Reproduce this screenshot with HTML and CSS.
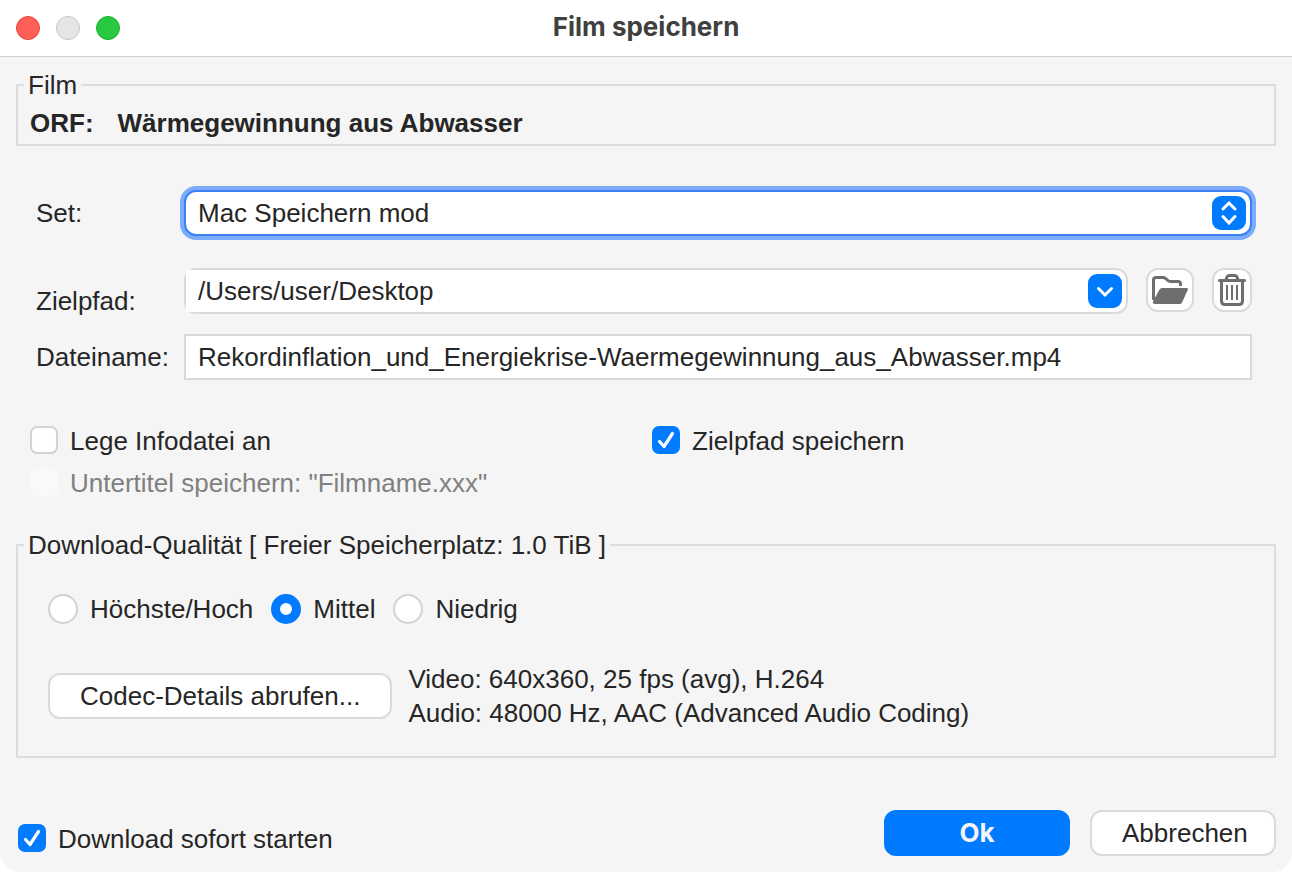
FILE: index.html
```html
<!DOCTYPE html>
<html lang="de">
<head>
  <meta charset="UTF-8">
  <meta name="viewport" content="width=device-width, initial-scale=1.0">
  <title>Film speichern</title>
  <link rel="stylesheet" href="styles.css">
</head>
<body>
  <div class="window">
    <header class="titlebar">
      <div class="lights">
        <span class="light close"></span>
        <span class="light minimize"></span>
        <span class="light zoom"></span>
      </div>
      <h1>Film speichern</h1>
    </header>

    <form class="content">
      <fieldset class="film">
        <legend>Film</legend>
        <p><span>ORF:</span><span>Wärmegewinnung aus Abwasser</span></p>
      </fieldset>

      <div class="fields">
        <label for="set">Set:</label>
        <div class="select-wrap">
          <select id="set">
            <option>Mac Speichern mod</option>
          </select>
          <svg class="arrows" viewBox="0 0 34 34" aria-hidden="true">
            <path d="M11 13 L17 7 L23 13 M11 20.5 L17 27 L23 20.5"/>
          </svg>
        </div>

        <label for="path" class="low">Zielpfad:</label>
        <div class="path-row">
          <div class="combo">
            <input type="text" id="path" value="/Users/user/Desktop">
            <button type="button" class="drop" aria-label="Pfade">
              <svg viewBox="0 0 34 34"><path d="M10.5 14.5 L17 21 L23.5 14.5"/></svg>
            </button>
          </div>
          <button type="button" class="icon-btn folder" aria-label="Ordner">
            <svg width="36" height="28" viewBox="0 0 36 28">
              <path d="M1.5 24 V4 Q1.5 1.5 4 1.5 H11 Q12.5 1.5 13.5 2.5 L16 4.5 Q17 5.5 18.5 5.5 H26 Q28.5 5.5 28.5 8 V10" fill="none" stroke="#6e6e6e" stroke-width="3"/>
              <path d="M10 12 H34.5 Q36.5 12 35.7 14 L30.5 25.5 Q29.5 28 28 28 H3 Q0 28 1 25.5 L7.5 13.5 Q8.5 12 10 12 Z" fill="#6e6e6e"/>
            </svg>
          </button>
          <button type="button" class="icon-btn trash" aria-label="Löschen">
            <svg width="28" height="32" viewBox="0 0 28 32" fill="none" stroke="#6e6e6e">
              <path d="M8 6 L9 3 Q9.5 1.5 11 1.5 H17 Q18.5 1.5 19 3 L20 6" stroke-width="3"/>
              <path d="M1.5 6.5 H26.5" stroke-width="3" stroke-linecap="round"/>
              <path d="M3.5 7 V27 Q3.5 30.5 7 30.5 H21 Q24.5 30.5 24.5 27 V7" stroke-width="3"/>
              <path d="M9 11 V26 M14 11 V26 M19 11 V26" stroke-width="2"/>
            </svg>
          </button>
        </div>

        <label for="name">Dateiname:</label>
        <input type="text" id="name" class="name" value="Rekordinflation_und_Energiekrise-Waermegewinnung_aus_Abwasser.mp4">
      </div>

      <div class="options">
        <label class="check"><input type="checkbox">Lege Infodatei an</label>
        <label class="check"><input type="checkbox" checked>Zielpfad speichern</label>
        <label class="check disabled"><input type="checkbox" disabled>Untertitel speichern: "Filmname.xxx"</label>
      </div>

      <fieldset class="quality">
        <legend>Download-Qualität [ Freier Speicherplatz: 1.0 TiB ]</legend>
        <div class="radios">
          <label class="check"><input type="radio" name="quality">Höchste/Hoch</label>
          <label class="check"><input type="radio" name="quality" checked>Mittel</label>
          <label class="check"><input type="radio" name="quality">Niedrig</label>
        </div>
        <div class="codec">
          <button type="button" class="btn">Codec-Details abrufen...</button>
          <p>Video: 640x360, 25 fps (avg), H.264<br>Audio: 48000 Hz, AAC (Advanced Audio Coding)</p>
        </div>
      </fieldset>

      <footer class="footer">
        <label class="check"><input type="checkbox" checked>Download sofort starten</label>
        <button type="submit" class="btn primary">Ok</button>
        <button type="button" class="btn">Abbrechen</button>
      </footer>
    </form>
  </div>
</body>
</html>
```
FILE: styles.css
```css
*,*::before,*::after{
  margin: 0;
  padding: 0;
  box-sizing: border-box;
}
body{
  background: #fff;
  color: #262626;
  font: 26px/30px "Liberation Sans", Arial, sans-serif;
}
input, select, button{
  font: inherit;
  color: inherit;
  outline: none;
}
.window{
  min-height: 100vh;
  background: #f5f5f5;
  border-radius: 0 0 20px 20px;
}

/* title bar */
.titlebar{
  display: grid;
  grid-template-columns: 1fr auto 1fr;
  align-items: center;
  height: 57px;
  padding: 0 16px;
  background: #fff;
  border-bottom: 1px solid #cfcfcf;
}
.titlebar h1{
  font: 700 26px/30px Inter, sans-serif;
  color: #404040;
  padding-bottom: 2px;
}
.lights{
  display: flex;
  gap: 16px;
}
.light{
  width: 24px;
  height: 24px;
  border-radius: 50%;
  border: 1px solid;
}
.close{
  background: #ff5f57;
  border-color: #e2463f;
}
.minimize{
  background: #e5e5e5;
  border-color: #c6c6c6;
}
.zoom{
  background: #28c840;
  border-color: #1fae30;
}

.content{
  padding: 13px 16px 16px;
}
fieldset{
  border: 2px solid #dcdcdc;
  min-width: 0;
}
legend{
  margin-left: 6px;
  padding: 0 4px;
}
.film p{
  display: flex;
  gap: 24px;
  padding: 8px 12px 6px;
  font-weight: 700;
}

/* form rows */
.fields{
  display: grid;
  grid-template-columns: 148px 1fr;
  align-items: center;
  padding: 44px 24px 0 20px;
}
.select-wrap{
  position: relative;
}
.select-wrap select{
  display: block;
  width: 100%;
  height: 46px;
  padding: 0 50px 0 12px;
  appearance: none;
  background: #fff;
  border: 2px solid #3b82f0;
  border-radius: 12px;
  box-shadow: 0 0 0 4px #7aacfb;
}
.arrows{
  position: absolute;
  top: 6px;
  right: 6px;
  width: 34px;
  height: 34px;
  border-radius: 9px;
  background: #007aff;
  pointer-events: none;
}
.arrows path, .drop path{
  fill: none;
  stroke: #fff;
  stroke-width: 3;
  stroke-linecap: round;
}
.low{
  align-self: end;
}
.path-row{
  display: flex;
  margin: 32px 0 20px;
}
.fields .low{
  margin-bottom: 18px;
}
.combo{
  flex: 1;
  display: flex;
  align-items: center;
  height: 46px;
  padding-right: 4px;
  background: #fff;
  border: 2px solid #dadada;
  border-radius: 12px;
}
.combo input{
  flex: 1;
  min-width: 0;
  height: 42px;
  padding-left: 12px;
  border: none;
  background: #fff;
}
.drop{
  width: 34px;
  height: 34px;
  border: none;
  border-radius: 9px;
  background: #007aff;
}
.drop svg{
  display: block;
}
.icon-btn{
  display: flex;
  align-items: center;
  justify-content: center;
  height: 44px;
  margin-left: 18px;
  background: #fff;
  border: 2px solid #dadada;
  border-radius: 12px;
}
.folder{
  width: 48px;
}
.trash{
  width: 40px;
}
.name{
  width: 100%;
  height: 46px;
  padding: 0 12px;
  background: #fff;
  border: 2px solid #dadada;
}

/* tick boxes and radios */
.options{
  display: grid;
  grid-template-columns: 1fr 1fr;
  gap: 12px 0;
  padding: 46px 2px 32px 14px;
}
.check{
  display: flex;
  gap: 12px;
}
.check input{
  flex: none;
  width: 28px;
  height: 28px;
  appearance: none;
  background: #fff;
  border: 2px solid #d2d2d2;
  border-radius: 7px;
}
.check input[type=checkbox]:checked{
  border: none;
  background: #007aff url("data:image/svg+xml,%3Csvg xmlns='http://www.w3.org/2000/svg' viewBox='0 0 28 28'%3E%3Cpath d='M7.5 15.500 L12 20.500 L20.500 7.500' fill='none' stroke='white' stroke-width='3.200' stroke-linecap='round' stroke-linejoin='round'/%3E%3C/svg%3E");
}
.check input[type=radio]{
  width: 30px;
  height: 30px;
  border-radius: 50%;
}
.check input[type=radio]:checked{
  background: #fff;
  border: 9px solid #007aff;
}
.disabled{
  color: #808080;
}
.check input:disabled{
  background: #f9f9f9;
  border-color: #f9f9f9;
}

.radios{
  display: flex;
  gap: 18px;
  padding: 34px 30px 0;
}
.codec{
  display: flex;
  align-items: center;
  gap: 16px;
  padding: 38px 30px 26px;
}
.codec p{
  line-height: 34px;
}
.btn{
  height: 46px;
  padding: 0 30px;
  background: #fff;
  border: 2px solid #dadada;
  border-radius: 12px;
}
.footer{
  display: flex;
  align-items: center;
  gap: 20px;
  padding-top: 52px;
}
.footer .check{
  flex: 1;
  padding: 12px 0 0 2px;
}
.footer .btn{
  width: 186px;
}
.footer .primary{
  background: #007aff;
  border-color: #007aff;
  color: #f5f5f5;
  font-family: Inter, sans-serif;
  font-weight: 700;
}
```
